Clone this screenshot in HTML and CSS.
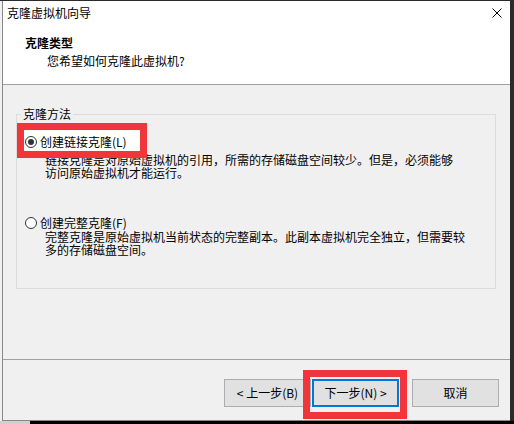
FILE: index.html
```html
<!DOCTYPE html>
<html lang="zh-CN">
<head>
<meta charset="utf-8">
<title>克隆虚拟机向导</title>
<link rel="stylesheet" href="styles.css">
</head>
<body>
<div class="screen">
  <div class="row">
    <div class="edge-left"></div>
    <div class="window">
      <div class="header">
        <div class="titlebar">
          <span class="title">克隆虚拟机向导</span>
          <svg class="close" width="10" height="10" viewBox="0 0 10 10"><path d="M0.5 0.5L9.5 9.5M9.5 0.5L0.5 9.5" stroke="#000" stroke-width="1" fill="none"/></svg>
        </div>
        <div class="heading">克隆类型</div>
        <div class="subheading">您希望如何克隆此虚拟机?</div>
      </div>
      <div class="body">
        <fieldset class="group">
          <legend class="legend">克隆方法</legend>
          <div class="option first">
            <span class="mark"></span>
            <div class="opt-row">
              <span class="radio checked"></span>
              <span class="opt-label">创建链接克隆(L)</span>
            </div>
            <div class="desc">链接克隆是对原始虚拟机的引用，所需的存储磁盘空间较少。但是，必须能够<br>访问原始虚拟机才能运行。</div>
          </div>
          <div class="option second">
            <div class="opt-row">
              <span class="radio"></span>
              <span class="opt-label">创建完整克隆(F)</span>
            </div>
            <div class="desc">完整克隆是原始虚拟机当前状态的完整副本。此副本虚拟机完全独立，但需要较<br>多的存储磁盘空间。</div>
          </div>
        </fieldset>
      </div>
      <div class="footer">
        <button class="btn">&lt; 上一步(B)</button>
        <button class="btn default">下一步(N) &gt;<span class="mark-btn"></span></button>
        <button class="btn cancel">取消</button>
      </div>
    </div>
    <div class="edge-right"></div>
  </div>
  <div class="edge-bottom"><div class="eb-light"></div><div class="eb-dark"></div></div>
</div>
</body>
</html>
```
FILE: styles.css
```css
* { box-sizing: border-box; }
html, body { margin: 0; padding: 0; }
body {
  width: 514px;
  height: 424px;
  overflow: hidden;
  background: #f0f0f0;
  font-family: "Noto Sans CJK SC", "Noto Sans", sans-serif;
  font-size: 12px;
  color: #000;
}
.screen { border-top: 1px solid #2b2b2b; }
.row { display: flex; height: 420px; }
.edge-left { width: 2px; background: #f0f0f0; }
.edge-right { flex: 1; background: #2b2b2b; }
.window {
  width: 508px;
  height: 420px;
  border-left: 1px solid #888;
  border-bottom: 1px solid #888;
  display: flex;
  flex-direction: column;
  background: #f0f0f0;
}
.header {
  height: 84px;
  background: #fff;
  border-bottom: 1px solid #a0a0a0;
}
.titlebar {
  height: 24px;
  display: flex;
  align-items: center;
  justify-content: space-between;
  padding: 0 8px 0 4px;
  line-height: 16px;
}
.close { display: block; }
.heading {
  margin-top: 10px;
  padding-left: 22px;
  line-height: 16px;
  font-weight: bold;
}
.subheading {
  margin-top: 2px;
  padding-left: 44px;
  line-height: 16px;
}
.body {
  height: 274px;
  padding: 21px 0 0 13px;
}
.group {
  width: 480px;
  height: 183px;
  margin: 0;
  padding: 0;
  border: 1px solid #dcdcdc;
  min-inline-size: 0;
}
.legend {
  margin-left: 4px;
  padding: 0 2px;
  line-height: 16px;
}
.option { position: relative; padding-left: 8px; }
.option.first { margin-top: 13px; }
.option.second { margin-top: 37px; }
.opt-row {
  position: relative;
  z-index: 1;
  display: flex;
  align-items: center;
  gap: 3px;
  height: 14px;
  line-height: 14px;
}
.radio {
  width: 12px;
  height: 12px;
  border: 1px solid #333;
  border-radius: 50%;
  background: #fff;
  display: flex;
  align-items: center;
  justify-content: center;
  flex: none;
}
.radio.checked::after {
  content: "";
  width: 6px;
  height: 6px;
  border-radius: 50%;
  background: #333;
}
.desc {
  padding-left: 20px;
  line-height: 13px;
  white-space: nowrap;
}
.first .desc { margin-top: 4px; }
.mark {
  position: absolute;
  left: 0;
  top: -12px;
  width: 130px;
  height: 35px;
  border: 7px solid #f0353b;
  background: #fff;
}
.footer {
  flex: 1;
  border-top: 1px solid #a0a0a0;
  display: flex;
  justify-content: flex-end;
  align-items: flex-start;
  padding: 19px 11px 0 0;
}
.btn {
  position: relative;
  width: 87px;
  height: 28px;
  margin: 0;
  padding: 0;
  border: 1px solid #adadad;
  background: #e1e1e1;
  font-family: inherit;
  font-size: 12px;
  color: #000;
  line-height: 16px;
}
.btn.default {
  margin-left: 1px;
  border: 2px solid #0078d7;
}
.btn.cancel { margin-left: 13px; }
.mark-btn {
  position: absolute;
  left: -11px;
  top: -11px;
  right: -10px;
  bottom: -14px;
  border: 7px solid #f0353b;
  pointer-events: none;
}
.edge-bottom { display: flex; height: 3px; }
.eb-light { width: 30px; background: #d0d0d0; }
.eb-dark { flex: 1; background: #000; }
```
